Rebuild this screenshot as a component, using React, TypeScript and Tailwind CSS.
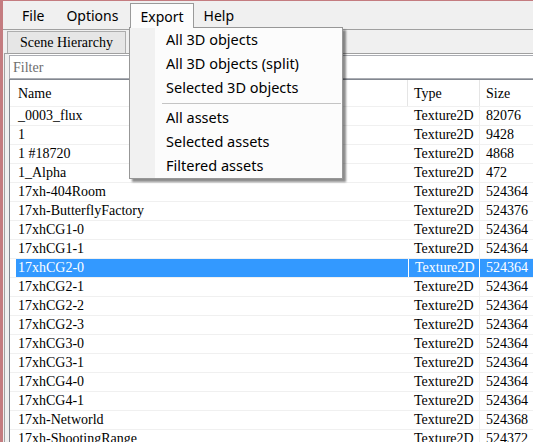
import React from "react";

const rows: [string, string, string][] = [
  ["_0003_flux", "Texture2D", "82076"],
  ["1", "Texture2D", "9428"],
  ["1 #18720", "Texture2D", "4868"],
  ["1_Alpha", "Texture2D", "472"],
  ["17xh-404Room", "Texture2D", "524364"],
  ["17xh-ButterflyFactory", "Texture2D", "524376"],
  ["17xhCG1-0", "Texture2D", "524364"],
  ["17xhCG1-1", "Texture2D", "524364"],
  ["17xhCG2-0", "Texture2D", "524364"],
  ["17xhCG2-1", "Texture2D", "524364"],
  ["17xhCG2-2", "Texture2D", "524364"],
  ["17xhCG2-3", "Texture2D", "524364"],
  ["17xhCG3-0", "Texture2D", "524364"],
  ["17xhCG3-1", "Texture2D", "524364"],
  ["17xhCG4-0", "Texture2D", "524364"],
  ["17xhCG4-1", "Texture2D", "524364"],
  ["17xh-Networld", "Texture2D", "524368"],
  ["17xh-ShootingRange", "Texture2D", "524372"],
];

const serif = { fontFamily: '"Liberation Serif", "DejaVu Serif", serif' };
const sans = { fontFamily: '"Noto Sans", "Open Sans", sans-serif' };

export default function App() {
  return (
    <div className="relative w-[533px] h-[442px] overflow-hidden bg-[#f0f0f0] border-l-[3px] border-t border-[#c47c80]">
      {/* Menu bar */}
      <div className="flex h-[28px] items-start pt-[2px] pl-[9px] text-[14px] text-black" style={sans}>
        <div className="h-[24px] px-[10px] flex items-center">File</div>
        <div className="h-[24px] px-[10px] ml-[2px] flex items-center">Options</div>
        <div className="h-[25px] px-[9px] ml-[2px] flex items-center border border-b-0 border-[#9a9a9a] bg-[#fcfcfc] relative z-20">Export</div>
        <div className="h-[24px] px-[10px] flex items-center">Help</div>
      </div>
      <div className="h-px bg-[#a0a0a0]" />
      {/* Tab strip */}
      <div className="h-[23px] flex items-end pl-[4px]">
        <div className="h-[22px] w-[119px] border border-b-0 border-[#adadad] bg-[#e6e6e6] flex items-center justify-center text-[14px] text-black" style={serif}>
          Scene Hierarchy
        </div>
      </div>
      {/* Panel */}
      <div className="border-t border-[#a0a0a0] border-l border-l-[#a0a0a0] ml-[1px] pl-[4px] h-[400px] bg-[#f0f0f0]">
        <div className="border-t border-white h-full">
          <div className="h-[24px] bg-white border border-[#abadb3] border-r-0 flex items-center pl-[3px] text-[14px] text-[#6d6d6d]" style={serif}>
            Filter
          </div>
          <div className="bg-white border-l border-t border-[#828790] h-full" style={serif}>
            {/* header */}
            <div className="flex h-[27px] border-b border-[#f0f0f0] text-[14px] text-black">
              <div className="w-[398px] pl-[8px] flex items-center border-r border-[#e5e5e5]">Name</div>
              <div className="w-[72px] pl-[6px] flex items-center border-r border-[#e5e5e5]">Type</div>
              <div className="flex-1 pl-[6px] flex items-center">Size</div>
            </div>
            {rows.map(([n, t, s], i) => {
              const sel = i === 8;
              return (
                <div key={i} className="flex h-[19px] border-b border-[#f0f0f0] text-[14px] leading-[18px]">
                  <div className="w-[398px] pl-[6px] flex">
                    <div className={"flex-1 pl-[2px] " + (sel ? "bg-[#3399ff] text-white" : "text-black")}>{n}</div>
                  </div>
                  <div className={"w-[72px] pl-[6px] border-l border-r " + (sel ? "bg-[#3399ff] text-white border-white" : "text-black border-[#f0f0f0] border-l-0")}>{t}</div>
                  <div className={"flex-1 pl-[6px] " + (sel ? "bg-[#3399ff] text-white" : "text-black")}>{s}</div>
                </div>
              );
            })}
          </div>
        </div>
      </div>

      {/* Dropdown menu */}
      <div
        className="absolute left-[126px] top-[26px] w-[214px] h-[152px] bg-[#fcfcfc] border border-[#979797] z-10 shadow-[3px_3px_2px_rgba(0,0,0,0.45)] text-[14.5px] text-black"
        style={sans}
      >
        <div className="absolute left-0 top-0 bottom-0 w-[25px] bg-[#f1f1f1]" />
        <div className="relative">
          {["All 3D objects", "All 3D objects (split)", "Selected 3D objects"].map((l) => (
            <div key={l} className="h-[24px] pl-[36px] pb-[1px] flex items-center">{l}</div>
          ))}
          <div className="h-[6px] flex items-center pl-[32px]">
            <div className="h-px w-full bg-[#c4c4c4] mr-[1px]" />
          </div>
          {["All assets", "Selected assets", "Filtered assets"].map((l) => (
            <div key={l} className="h-[24px] pl-[36px] pb-[1px] flex items-center">{l}</div>
          ))}
        </div>
      </div>
    </div>
  );
}
